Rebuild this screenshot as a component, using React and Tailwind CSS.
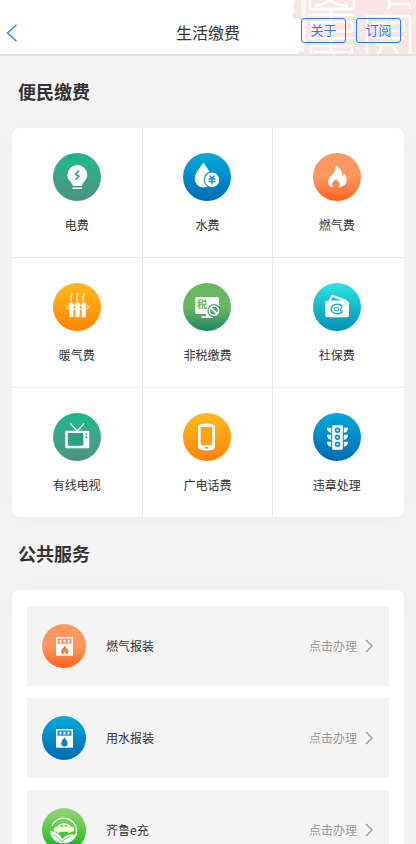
import React from 'react';

function ElectricIcon() {
  return (
    <>
      <path d="M24.3 12a10 10 0 0 0-10 10c0 4.6 3.6 6.400 5 9.400.4.900.6 1.600 1.400 1.600h7.200c.8 0 1-.7 1.400-1.600 1.400-3 5-4.800 5-9.400a10 10 0 0 0-10-10z" fill="#fff" />
      <path d="M19.500 35.200h9.500" stroke="#fff" strokeWidth="1.500" />
      <path d="M26 17.500l-3.600 3.700 3.700 1.900-3.700 4" fill="none" stroke="#1fa58a" strokeWidth="1.500" />
    </>
  );
}

function WaterIcon() {
  return (
    <>
      <path d="M20.500 9.500c-3 4.800-8.800 10.600-8.800 16.400a8.600 8.600 0 0 0 17.300 0c0-5.800-5.700-11.600-8.500-16.400z" fill="#fff" />
      <circle cx="29" cy="26.800" r="8.400" fill="#118cc9" />
      <circle cx="29" cy="26.800" r="7.200" fill="#fff" />
      <path d="M26.500 22.500l2.500 3 2.500-3M29 25.500v6M25.500 26h7M25.500 28.500h7" fill="none" stroke="#118cc9" strokeWidth="1.300" />
    </>
  );
}

function GasIcon() {
  return (
    <path
      d="M22.500 12.500c.7 4-1 6.500-3.500 9.300-2.300 2.500-4.400 4.500-4.100 7.700.2 2.500 2.200 4.300 5.200 5-2-3.800-.4-5.800 3.400-8.700.2 2.600 3.200 3.200 3.200 5.900 0 1.200-.5 2-1.200 2.800 4-.3 7.700-2.600 8.100-6.700.3-3.400-1.200-5.400-2.700-7.800-.1 1.300-.6 2.200-1.700 2.700.2-4.500-2.400-8.500-6.700-10.200z"
      fill="#fff"
    />
  );
}

function HeatingIcon() {
  return (
    <>
      <g fill="#fff">
        <rect x="16" y="19.500" width="4.500" height="14.700" rx="1.200" />
        <rect x="22.200" y="19.500" width="4.500" height="14.700" rx="1.200" />
        <rect x="28.400" y="19.500" width="4.500" height="14.700" rx="1.200" />
      </g>
      <g fill="none" stroke="#fff" strokeWidth="1">
        <path d="M16 22.500h-.5a1.800 1.800 0 0 0 0 3.600h.5M33 22.500h.4a1.800 1.800 0 0 1 0 3.600H33M20 22.500h9M20 26.100h9" />
        <path d="M18.500 10c1.500 2.700-1.300 3-.8 5 .2 1.200 1.300 1.500.6 3.500M24.500 10c1.500 2.700-1.300 3-.8 5 .2 1.200 1.300 1.500.6 3.500M30.500 10c1.500 2.700-1.300 3-.8 5 .2 1.200 1.300 1.500.6 3.500" strokeWidth="1.200" />
      </g>
    </>
  );
}

function TaxIcon() {
  return (
    <>
      <rect x="12.300" y="14" width="23.700" height="17" rx="1.500" fill="#fff" />
      <path d="M23 31h4v2.300h3V35H18.500v-1.700H23z" fill="#fff" />
      <text x="14" y="25" fontSize="10" fontWeight="700" fill="#67b75f" fontFamily="Noto Sans CJK SC, sans-serif">税</text>
      <circle cx="31" cy="27.700" r="6.600" fill="#4faa60" />
      <circle cx="31" cy="27.700" r="4.600" fill="none" stroke="#fff" strokeWidth="1.500" />
      <path d="M28 25l6 5.500" stroke="#fff" strokeWidth="1.700" />
    </>
  );
}

function SocialIcon() {
  return (
    <>
      <path d="M15.500 18l2.600-5.200a1.500 1.500 0 0 1 1.900-.8l12.700 4.600 1.800 2z" fill="#fff" />
      <path d="M17.500 17.800l2-3.600 9.500 3.400z" fill="#20bfd0" />
      <rect x="12" y="17.800" width="24" height="16.500" rx="2.500" fill="#fff" />
      <path d="M29.500 23c-1.300-1.200-3-1.800-5.200-1.700-3.700.1-6 2.200-6 4.900 0 2.800 2.600 4.600 6.200 4.500 2.100-.1 3.700-.6 5-1.500" fill="none" stroke="#16acc3" strokeWidth="1.400" />
      <path d="M22.200 23.800c-1.300 1.500-.8 4.200 1.500 4.200 1.500 0 2.300-1 1.900-2.100-.3-1-1.800-1-2.300-1.900M29.300 22.500l-2 4.500 2.500 1.500" fill="none" stroke="#16acc3" strokeWidth="1.100" />
    </>
  );
}

function TvIcon() {
  return (
    <>
      <path d="M17.300 10.500l7 7.500 6.800-7.500" fill="none" stroke="#fff" strokeWidth="1.500" />
      <rect x="12.300" y="17.700" width="24" height="17.600" rx="1" fill="#fff" />
      <rect x="14.800" y="20" width="15.600" height="12.800" rx="1" fill="#2d9f88" />
      <circle cx="33.300" cy="21.300" r="1" fill="#2d9f88" />
      <circle cx="33.300" cy="24.300" r="1" fill="#2d9f88" />
    </>
  );
}

function PhoneIcon() {
  return (
    <>
      <path d="M15 13.500c0-4 17-4 17 0v21c0 4-17 4-17 0z" fill="#fff" />
      <rect x="17.700" y="14" width="11.500" height="18" fill="#ffa315" />
      <rect x="22" y="34" width="3" height="1.500" rx="0.500" fill="#ff9510" />
    </>
  );
}

function TrafficIcon() {
  return (
    <>
      <rect x="19.200" y="12.300" width="10.600" height="24.400" rx="0.800" fill="#fff" />
      {[17.3, 24.3, 31.3].map((y) => (
        <g key={y} transform={`translate(0 ${y})`}>
          <path d="M18.200-2.500H14c0 2.700 1.500 4.700 4.200 5.200zM30.800-2.500H35c0 2.700-1.500 4.700-4.200 5.200z" fill="#fff" />
          <circle cx="24.500" r="1.900" fill="#fff" stroke="#148bca" strokeWidth="1.700" />
        </g>
      ))}
    </>
  );
}

function MeterIcon({ color, children }) {
  return (
    <>
      <rect x="14" y="13" width="17" height="18.700" fill="#fff" />
      <rect x="15.500" y="14.500" width="14" height="5.200" fill={color} />
      <path d="M17.500 15.700h2v2.800h-2zM21.500 15.700h2v2.800h-2zM25.500 15.700h2v2.800h-2z" fill="#fff" />
      {children}
    </>
  );
}

function GasMeterIcon() {
  return (
    <MeterIcon color="#ff8c50">
      <path d="M22.300 21.500c.5 2-3.300 3.500-3.300 6 0 1.500 1.100 2.700 2.700 2.900-.3-1.400.2-2 1-2.900.5 1 1.300 1.500.8 2.900 1.800-.2 2.900-1.400 2.900-3 0-1.200-.6-2-1.200-2.800l-.6.900c-.1-1.700-.8-3.200-2.300-4z" fill="#ff7730" />
    </MeterIcon>
  );
}

function WaterMeterIcon() {
  return (
    <MeterIcon color="#128fcc">
      <path d="M22.400 21.300c-1.200 2-3.200 3.800-3.200 6a3.200 3.200 0 0 0 6.400 0c0-2.200-2-4-3.200-6z" fill="#1182c3" />
    </MeterIcon>
  );
}

function ChargeIcon() {
  return (
    <>
      <path d="M9.800 18a12.900 12.900 0 0 1 24.700 3.500c.5 5.500-2 9.500-7 12" fill="none" stroke="#fff" strokeWidth="1.300" />
      <path d="M12 21c.3-1.800 1.600-2.400 3.800-2.600 1.800-2.300 3.700-3.100 6.500-3.100 2.900 0 4.600 1.200 6 3 2.600.3 3.900 1.300 3.900 3.200 0 1.400-.7 2.200-1.900 2.200H13.500c-1.200 0-1.700-1.200-1.500-2.700z" fill="#f7ffd8" />
      <path d="M17.500 18.500c1.100-1.200 2.200-1.700 3.800-1.700v1.900zM22.500 16.800c1.600.1 2.700.6 3.700 1.900h-3.700z" fill="#70cd5a" />
      <circle cx="16.500" cy="23.500" r="1.500" fill="#f7ffd8" />
      <circle cx="27.500" cy="23.500" r="1.500" fill="#f7ffd8" />
      <path d="M8 22.500c4.500 1.300 10 3 12.300 9 2.200-4 6.200-5.500 12.700-5-1.500 6-6 9-12 8.700-7.500 0-12-4.700-13-12.700z" fill="#fff" />
      <path d="M11.500 26.500c3 1.500 6 4 8.500 7.500 2.500-3 5-4.700 9-6" fill="none" stroke="#2dc23c" strokeWidth="0.800" />
    </>
  );
}

const bills = [
  { name: '电费', Icon: ElectricIcon, bg: 'bg-linear-to-b from-[#12b98e] to-[#4c9182]' },
  { name: '水费', Icon: WaterIcon, bg: 'bg-linear-to-b from-[#00acda] to-[#0069b4]' },
  { name: '燃气费', Icon: GasIcon, bg: 'bg-linear-to-b from-[#ff965e] from-50% to-[#ff600c]' },
  { name: '暖气费', Icon: HeatingIcon, bg: 'bg-linear-to-b from-[#ffba1c] to-[#ff8208]' },
  { name: '非税缴费', Icon: TaxIcon, bg: 'bg-linear-to-b from-[#67b85f] from-50% to-[#1b8562]' },
  { name: '社保费', Icon: SocialIcon, bg: 'bg-linear-to-b from-[#2ae6e4] to-[#068fb3]' },
  { name: '有线电视', Icon: TvIcon, bg: 'bg-linear-to-b from-[#12b98e] to-[#4c9182]' },
  { name: '广电话费', Icon: PhoneIcon, bg: 'bg-linear-to-b from-[#ffba1c] to-[#ff8208]' },
  { name: '违章处理', Icon: TrafficIcon, bg: 'bg-linear-to-b from-[#00acda] to-[#0069b4]' },
];

const services = [
  { name: '燃气报装', Icon: GasMeterIcon, bg: 'bg-linear-to-b from-[#ff965e] from-50% to-[#ff600c]' },
  { name: '用水报装', Icon: WaterMeterIcon, bg: 'bg-linear-to-b from-[#00acda] to-[#0069b4]' },
  { name: '齐鲁e充', Icon: ChargeIcon, bg: 'bg-linear-to-b from-[#93d675] to-[#00bd20] to-85%' },
];

// Pale red seal in the corner of the header
function Seal() {
  return (
    <svg className="absolute right-0 top-0 h-full" width="124" viewBox="0 0 124 54" preserveAspectRatio="xMaxYMin slice" aria-hidden="true">
      <path d="M3 0h121v54H6l2-9 4-9-3-2 1-13-4-3-4 1-2-4 3-4-2-4z" fill="#fae5e4" />
      <path d="M9 0h5v18l-4 2zM10 22h5l-3 30H6l2-8 4-9-3-2z" fill="#fff" opacity="0.700" />
      <g fill="none" stroke="#fff" strokeWidth="2.500" strokeLinejoin="round">
        <path d="M18 0v7q0 2 2 2h40q2 0 2-2V0M23 6q10-2 15-6 6 5 18 6" />
        <path d="M16 15h46M39 10v44M20 22h40v9H20zM16 38h46M19 54v-6q0-2 2-2h37q2 0 2 2v6M22 52h36" />
        <path d="M97 9V0M97 4h21M118 4v5" />
        <path d="M75 54V18q0-2 2-2h39q2 0 2 2v36M81 23h13v8H81zM99 23h13v8H99zM80 38h32M84 45h24M86 54l4-8M106 54l-5-8" />
      </g>
    </svg>
  );
}

export default function App() {
  return (
    <div className="min-h-screen bg-[#f4f4f4] pb-6 font-['Noto_Sans_CJK_SC',sans-serif] text-[#333]">
      {/* Header */}
      <header className="relative grid h-14 grid-cols-[1fr_auto_1fr] items-center border-b-2 border-[#e2e2e2] bg-white pt-2">
        <Seal />
        <button aria-label="返回" className="ml-1 flex h-8 items-center pl-0.5 pt-1">
          <svg width="12" height="18" viewBox="0 0 12 18" fill="none" stroke="#4285f4" strokeWidth="1.500">
            <path d="M10.500 0.800L1.500 9l9 8.200" />
          </svg>
        </button>
        <h1 className="pt-0.5 text-base leading-6">生活缴费</h1>
        <div className="relative flex justify-end gap-2.5 pr-[15px] text-[13px] leading-5 text-[#2b7bf5]">
          <button className="mb-px h-[25px] w-[45px] rounded-[3px] border border-[#2b7bf5] pb-0.5">关于</button>
          <button className="mb-px h-[25px] w-[45px] rounded-[3px] border border-[#2b7bf5] pb-0.5">订阅</button>
        </div>
      </header>

      <main className="px-3">
        {/* Bills */}
        <h2 className="px-1.5 pb-[25px] pt-[23px] text-lg font-bold leading-6">便民缴费</h2>
        <div className="grid grid-cols-3 overflow-hidden rounded-lg bg-white shadow-[0_0_24px_rgba(0,0,0,0.03)]">
          {bills.map(({ name, Icon, bg }, i) => (
            <button
              key={name}
              className={`flex flex-col items-center gap-4 border-[#ececec] pb-6 pt-[25px] ${i % 3 < 2 ? 'border-r' : 'pr-1'} ${i < 6 ? 'border-b' : ''}`}
            >
              <span className={`rounded-full ${bg}`}>
                <svg width="48" height="48" viewBox="0 0 48 48" aria-hidden="true">
                  <Icon />
                </svg>
              </span>
              <span className="text-xs leading-4">{name}</span>
            </button>
          ))}
        </div>

        {/* Public services */}
        <h2 className="px-1.5 pb-[25px] pt-6 text-lg font-bold leading-6">公共服务</h2>
        <div className="flex flex-col gap-3 rounded-lg bg-white px-[15px] py-4 shadow-[0_0_24px_rgba(0,0,0,0.03)]">
          {services.map(({ name, Icon, bg }) => (
            <button key={name} className="flex h-20 items-center bg-[#f4f4f4] px-[15px] text-xs">
              <span className={`rounded-full ${bg}`}>
                <svg width="44" height="44" viewBox="0 0 44 44" aria-hidden="true">
                  <Icon />
                </svg>
              </span>
              <span className="ml-5 flex-1 text-left">{name}</span>
              <span className="text-[#999]">点击办理</span>
              <svg className="ml-2" width="9" height="14" viewBox="0 0 9 14" fill="none" stroke="#999" strokeWidth="1.200" aria-hidden="true">
                <path d="M1 1l6 6-6 6" />
              </svg>
            </button>
          ))}
        </div>
      </main>
    </div>
  );
}
